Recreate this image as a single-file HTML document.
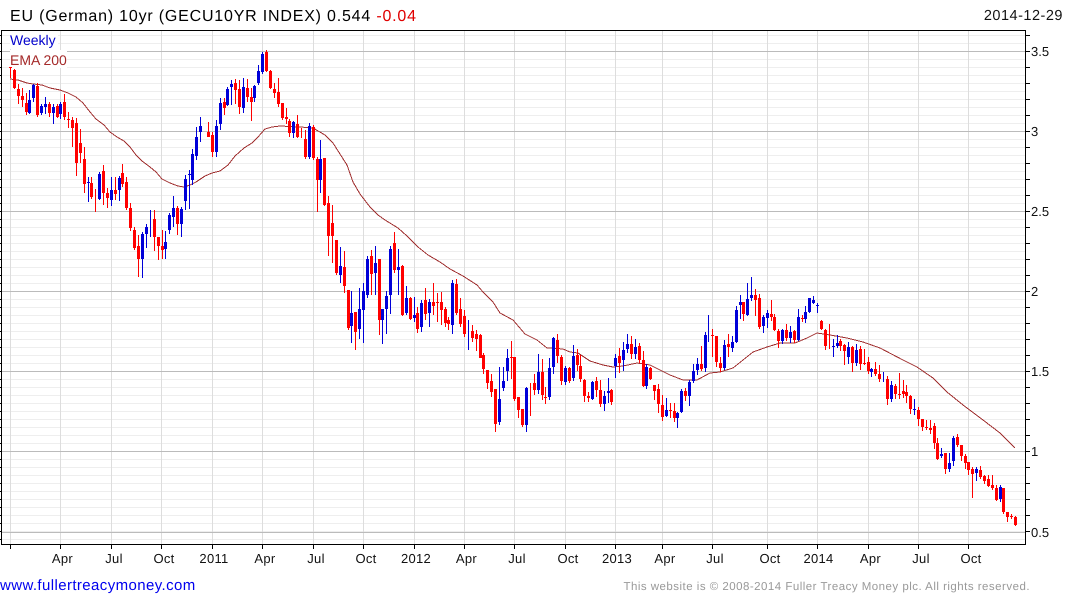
<!DOCTYPE html>
<html><head><meta charset="utf-8"><title>EU (German) 10yr</title>
<style>
html,body{margin:0;padding:0;background:#fff;width:1075px;height:600px;overflow:hidden}
svg{display:block;font-family:"Liberation Sans",Arial,sans-serif}
text{text-rendering:geometricPrecision}
</style></head><body>
<svg width="1075" height="600" viewBox="0 0 1075 600" xmlns="http://www.w3.org/2000/svg">
<defs>
<pattern id="mn" patternUnits="userSpaceOnUse" x="0" y="3" width="10" height="8"><rect width="10" height="1" fill="#eeeeee"/></pattern>
<pattern id="lt" patternUnits="userSpaceOnUse" x="0" y="3" width="3" height="8"><rect width="3" height="1" fill="#000"/></pattern>
<pattern id="rt" patternUnits="userSpaceOnUse" x="0" y="3" width="5" height="16"><rect width="5" height="1" fill="#000"/></pattern>
</defs>
<rect width="1075" height="600" fill="#fff"/>
<rect x="2" y="31" width="1023" height="513" fill="url(#mn)" shape-rendering="crispEdges"/>
<g shape-rendering="crispEdges" fill="none">
<path stroke="#dddddd" d="M10.5 31V544M60.5 31V544M111.5 31V544M161.5 31V544M212.5 31V544M262.5 31V544M313.5 31V544M363.5 31V544M414.5 31V544M464.5 31V544M514.5 31V544M565.5 31V544M615.5 31V544M662.5 31V544M712.5 31V544M767.5 31V544M817.5 31V544M868.5 31V544M918.5 31V544M968.5 31V544"/>
<path stroke="#bbbbbb" d="M2 51.5H1025M2 131.5H1025M2 211.5H1025M2 291.5H1025M2 371.5H1025M2 451.5H1025M2 532.5H1025"/>
</g>
<rect x="10" y="50" width="57" height="18" fill="#fff"/>
<rect x="10" y="31" width="48" height="18" fill="#fff"/>

<polyline fill="none" stroke="#a03030" stroke-width="1" shape-rendering="crispEdges" points="10,79 18,80 27,83 33,84 42,85 50,88 60,90 68,93 76,97 83,103 90,112 96,119 104,125 110,132 117,137 124,141 130,147 136,155 142,161 150,167 156,172 162,179 170,183 178,186 184,187 190,185 196,182 205,176 212,173 220,171 228,165 235,156 244,148 252,143 258,137 265,129 272,127 280,126 300,127 313,128 325,135 333,143 347,165 353,182 360,194 370,207 378,215 385,220 398,228 407,236 418,247 428,255 440,262 450,269 463,276 477,285 483,292 493,302 500,313 513,320 525,334 537,340 547,348 550,348 563,349 570,352 578,353 590,361 603,365 613,367 623,366 637,363 650,365 660,370 670,375 683,380 697,380 710,373 720,372 733,368 743,360 753,352 767,347 780,343 795,343 807,338 817,333 830,335 847,338 863,342 880,348 903,360 917,367 933,378 947,392 963,405 983,420 1000,433 1015,448"/>

<g shape-rendering="crispEdges" fill="none">
<!-- red wicks -->
<path stroke="#f00" stroke-width="1" d="M10.5 67V78M14.5 69V89M18.5 84V104M22.5 88V107M26.5 93V115M37.5 83V117M49.5 102V117M57.5 104V118M64.5 94V120M68.5 112V128M72.5 117V147M76.5 118V176M80.5 129V163M84.5 147V193M91.5 177V199M95.5 189V212M103.5 165V205M107.5 188V208M115.5 177V200M122.5 164V187M126.5 177V210M130.5 203V231M134.5 227V250M138.5 235V277M154.5 210V251M158.5 237V260M162.5 230V259M177.5 206V235M208.5 122V137M212.5 132V157M224.5 98V115M235.5 79V104M239.5 80V114M247.5 79V102M251.5 88V121M266.5 50V72M270.5 70V89M274.5 83V98M278.5 78V107M282.5 103V120M286.5 108V124M289.5 119V137M297.5 115V138M301.5 128V138M305.5 130V159M313.5 125V160M317.5 157V212M324.5 158V206M328.5 196V256M332.5 205V263M336.5 240V275M344.5 251V293M348.5 290V330M355.5 312V350M371.5 250V295M379.5 259V335M394.5 232V273M402.5 265V316M410.5 297V320M417.5 307V333M425.5 288V320M433.5 283V315M437.5 293V322M441.5 292V325M445.5 307V327M448.5 317V330M456.5 279V315M460.5 298V327M464.5 310V337M472.5 325V342M476.5 330V351M480.5 334V358M483.5 353V374M487.5 370V389M491.5 374V397M495.5 389V432M511.5 341V379M514.5 357V401M518.5 397V418M522.5 409V427M530.5 383V416M534.5 374V395M542.5 359V400M545.5 387V404M557.5 334V363M561.5 355V385M569.5 367V383M577.5 349V371M580.5 355V382M584.5 379V402M588.5 392V402M596.5 377V397M600.5 380V407M611.5 389V405M619.5 348V373M631.5 336V359M639.5 343V363M643.5 351V387M650.5 367V380M654.5 385V400M658.5 384V413M662.5 395V421M670.5 403V418M674.5 403V422M685.5 388V401M701.5 346V371M712.5 329V357M716.5 336V367M720.5 357V372M728.5 334V357M743.5 302V321M755.5 289V316M759.5 294V329M771.5 300V321M774.5 314V331M778.5 329V348M786.5 324V341M794.5 330V343M802.5 315V322M821.5 320V330M825.5 329V350M829.5 324V349M840.5 339V351M844.5 344V365M852.5 346V372M860.5 346V370M864.5 349V365M868.5 357V374M875.5 362V376M879.5 365V382M887.5 376V405M895.5 384V399M899.5 373V399M903.5 380V398M906.5 385V403M910.5 395V414M918.5 407V426M922.5 419V431M926.5 420V430M930.5 420V434M934.5 423V449M937.5 438V460M945.5 453V474M957.5 434V447M961.5 445V461M965.5 454V469M968.5 462V475M972.5 467V498M980.5 466V479M984.5 475V484M988.5 475V487M992.5 475V490M996.5 485V501M1003.5 488V514M1007.5 512V522M1011.5 514V519M1015.5 516V526"/>
<!-- red bodies -->
<path stroke="#f00" stroke-width="3" d="M10.5 67V68M14.5 70V88M18.5 89V96M22.5 96V100M26.5 103V112M37.5 86V115M49.5 104V113M57.5 106V117M64.5 102V117M68.5 119V120M72.5 120V128M76.5 123V163M80.5 143V153M84.5 159V184M91.5 183V197M103.5 171V193M107.5 193V198M115.5 190V194M122.5 173V184M126.5 182V208M130.5 208V228M134.5 230V248M138.5 246V259M154.5 219V237M158.5 237V246M162.5 246V250M177.5 208V224M208.5 132V137M212.5 135V152M224.5 102V108M235.5 83V90M239.5 89V107M247.5 88V97M251.5 97V102M266.5 52V71M270.5 71V88M274.5 89V93M278.5 92V104M282.5 103V118M286.5 117V119M289.5 121V133M297.5 124V137M305.5 139V157M313.5 127V158M317.5 159V180M324.5 158V205M328.5 203V236M332.5 223V236M336.5 240V273M344.5 267V286M348.5 290V328M355.5 312V332M371.5 256V274M379.5 259V320M394.5 243V270M402.5 266V315M410.5 298V319M417.5 313V329M425.5 300V314M433.5 302V306M437.5 302V303M441.5 302V310M445.5 309V323M448.5 320V324M456.5 284V313M460.5 309V324M464.5 316V334M472.5 331V338M476.5 334V339M480.5 335V358M483.5 355V369M487.5 370V383M491.5 381V392M495.5 389V424M511.5 357V358M514.5 357V399M518.5 397V410M522.5 409V425M534.5 383V390M542.5 372V395M545.5 397V398M557.5 340V356M561.5 357V381M569.5 368V381M577.5 355V365M580.5 366V379M584.5 380V396M588.5 396V398M596.5 381V390M600.5 390V404M611.5 390V402M619.5 356V363M631.5 344V354M639.5 346V360M643.5 360V386M650.5 368V379M654.5 385V391M658.5 389V404M662.5 405V417M670.5 410V411M674.5 411V418M685.5 391V396M701.5 364V369M712.5 335V336M716.5 336V362M720.5 363V368M728.5 344V347M743.5 302V314M755.5 295V300M759.5 298V327M771.5 314V317M774.5 317V330M778.5 331V341M786.5 330V338M794.5 331V340M802.5 318V319M821.5 321V329M825.5 330V346M840.5 341V346M844.5 345V351M852.5 347V363M860.5 349V364M864.5 363V364M868.5 362V371M875.5 369V374M879.5 374V379M887.5 379V399M895.5 386V394M899.5 394V395M903.5 391V394M906.5 392V396M910.5 396V409M918.5 410V419M922.5 419V427M926.5 427V428M930.5 428V430M934.5 426V443M937.5 443V459M945.5 453V469M957.5 437V445M961.5 445V456M965.5 456V463M968.5 462V470M972.5 469V474M980.5 470V477M984.5 476V481M988.5 479V486M992.5 485V488M996.5 488V500M1003.5 488V512M1007.5 512V517M1011.5 516V517M1015.5 517V525"/>
<!-- blue wicks -->
<path stroke="#0000d8" stroke-width="1" d="M29.5 90V114M33.5 84V102M41.5 104V115M45.5 97V114M53.5 104V124M60.5 102V119M88.5 177V202M99.5 172V200M111.5 177V206M119.5 176V201M142.5 232V278M146.5 224V248M150.5 210V237M165.5 231V259M169.5 213V234M173.5 196V227M181.5 207V237M185.5 175V210M189.5 170V209M192.5 149V185M196.5 127V160M200.5 117V142M216.5 120V157M220.5 98V130M227.5 87V106M231.5 80V105M243.5 78V113M254.5 85V102M258.5 65V85M262.5 52V74M293.5 121V138M309.5 123V159M320.5 140V193M340.5 247V283M351.5 291V343M359.5 288V339M363.5 283V343M367.5 256V298M375.5 246V295M382.5 309V344M386.5 291V334M390.5 246V314M398.5 249V295M406.5 286V315M414.5 297V322M421.5 300V332M429.5 299V327M452.5 280V334M468.5 320V350M499.5 367V425M503.5 367V391M507.5 349V381M526.5 387V432M538.5 354V394M549.5 358V400M553.5 337V374M565.5 366V385M573.5 345V381M592.5 381V400M604.5 391V411M608.5 378V403M615.5 354V378M623.5 342V371M627.5 334V353M635.5 339V359M646.5 364V389M666.5 398V417M677.5 412V428M681.5 389V413M689.5 380V406M693.5 364V383M697.5 358V375M705.5 332V372M708.5 315V342M724.5 340V370M732.5 336V352M736.5 306V343M740.5 295V319M747.5 283V316M751.5 277V301M763.5 315V333M767.5 310V328M782.5 329V344M790.5 326V343M798.5 309V341M805.5 306V323M809.5 298V313M813.5 296V304M817.5 303V313M833.5 339V357M837.5 335V348M848.5 342V364M856.5 344V366M871.5 368V377M883.5 372V382M891.5 381V402M914.5 399V415M941.5 448V458M949.5 453V472M953.5 436V466M976.5 467V481M1000.5 485V502"/>
<!-- blue bodies -->
<path stroke="#0000d8" stroke-width="3" d="M29.5 100V113M33.5 85V98M41.5 106V113M45.5 104V107M53.5 107V113M60.5 104V114M88.5 182V183M99.5 174V199M111.5 190V200M119.5 178V190M142.5 234V259M146.5 227V234M165.5 242V249M169.5 215V230M173.5 208V217M181.5 209V224M185.5 179V201M189.5 174V175M192.5 154V180M196.5 137V156M200.5 126V132M216.5 126V152M220.5 103V124M227.5 89V105M231.5 84V87M243.5 87V108M254.5 86V98M258.5 71V83M262.5 54V72M293.5 122V133M309.5 126V157M320.5 159V180M340.5 266V275M351.5 313V326M359.5 309V329M363.5 291V310M367.5 259V295M375.5 263V273M382.5 309V320M386.5 296V309M390.5 249V295M398.5 267V270M406.5 298V313M414.5 315V318M421.5 303V327M429.5 302V313M452.5 283V325M499.5 399V422M503.5 381V388M507.5 358V371M526.5 388V425M538.5 372V390M549.5 368V397M553.5 338V367M565.5 368V382M573.5 356V378M592.5 382V399M604.5 396V404M608.5 391V393M615.5 358V366M623.5 350V360M627.5 344V349M635.5 347V354M646.5 367V386M666.5 410V416M677.5 413V418M681.5 391V412M689.5 382V396M693.5 371V381M697.5 364V370M705.5 335V368M724.5 345V368M732.5 342V348M736.5 310V342M740.5 302V305M747.5 299V315M751.5 295V298M763.5 317V326M767.5 313V318M782.5 330V341M790.5 332V338M798.5 317V340M805.5 312V319M809.5 298V312M813.5 300V303M817.5 305V306M833.5 346V347M837.5 343V346M848.5 347V357M856.5 350V363M871.5 369V372M891.5 385V399M914.5 409V410M941.5 454V456M949.5 463V469M953.5 438V461M976.5 469V473M1000.5 487V499"/>
<!-- frame -->
<path stroke="#000" stroke-width="1" d="M1.5 30.5H1025.5M1.5 30V545M1025.5 30V545M1 544.5H1026"/>
<path stroke="#000" stroke-width="1" d="M10.5 544V549M60.5 544V549M111.5 544V549M161.5 544V549M212.5 544V549M262.5 544V549M313.5 544V549M363.5 544V549M414.5 544V549M464.5 544V549M514.5 544V549M565.5 544V549M615.5 544V549M662.5 544V549M712.5 544V549M767.5 544V549M817.5 544V549M868.5 544V549M918.5 544V549M968.5 544V549"/>
</g>
<rect x="0" y="31" width="1" height="513" fill="url(#lt)" shape-rendering="crispEdges"/>
<rect x="1026" y="31" width="4" height="513" fill="url(#rt)" shape-rendering="crispEdges"/>

<text x="10" y="45" font-size="14" fill="#0000cc">Weekly</text>
<text x="10" y="65" font-size="14" fill="#a52a2a">EMA 200</text>

<text x="10" y="21" font-size="16" fill="#000" style="letter-spacing:.8px">EU (German) 10yr (GECU10YR INDEX) 0.544 <tspan fill="#e00000">-0.04</tspan></text>
<text x="1063" y="20" font-size="14.5" text-anchor="end" fill="#111" style="letter-spacing:.5px">2014-12-29</text>

<g font-size="13" fill="#111">
<text x="1031" y="56">3.5</text>
<text x="1031" y="136">3</text>
<text x="1031" y="216">2.5</text>
<text x="1031" y="296">2</text>
<text x="1031" y="376">1.5</text>
<text x="1031" y="456">1</text>
<text x="1031" y="537">0.5</text>
<g text-anchor="middle" style="letter-spacing:.3px">
<text x="62.5" y="563">Apr</text>
<text x="114" y="563">Jul</text>
<text x="164" y="563">Oct</text>
<text x="214" y="563">2011</text>
<text x="265" y="563">Apr</text>
<text x="316" y="563">Jul</text>
<text x="366" y="563">Oct</text>
<text x="416" y="563">2012</text>
<text x="466.5" y="563">Apr</text>
<text x="517" y="563">Jul</text>
<text x="568" y="563">Oct</text>
<text x="617" y="563">2013</text>
<text x="665" y="563">Apr</text>
<text x="715" y="563">Jul</text>
<text x="770" y="563">Oct</text>
<text x="818.5" y="563">2014</text>
<text x="870.5" y="563">Apr</text>
<text x="921" y="563">Jul</text>
<text x="971" y="563">Oct</text>
</g>
</g>
<text x="0" y="590" font-size="15" fill="#0000ee" style="letter-spacing:.4px">www.fullertreacymoney.com</text>
<text x="1030" y="590" font-size="11.5" text-anchor="end" fill="#999" style="letter-spacing:.48px">This website is © 2008-2014 Fuller Treacy Money plc. All rights reserved.</text>
</svg>
</body></html>
